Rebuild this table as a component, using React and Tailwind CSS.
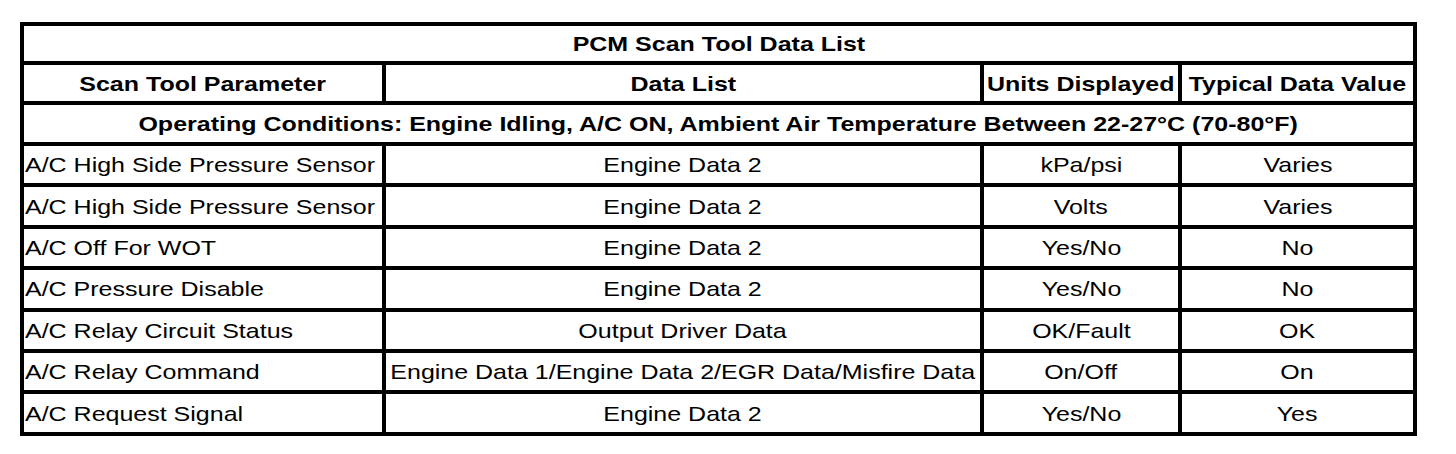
import React from "react";

const rows = [
  ["A/C High Side Pressure Sensor", "Engine Data 2", "kPa/psi", "Varies"],
  ["A/C High Side Pressure Sensor", "Engine Data 2", "Volts", "Varies"],
  ["A/C Off For WOT", "Engine Data 2", "Yes/No", "No"],
  ["A/C Pressure Disable", "Engine Data 2", "Yes/No", "No"],
  ["A/C Relay Circuit Status", "Output Driver Data", "OK/Fault", "OK"],
  [
    "A/C Relay Command",
    "Engine Data 1/Engine Data 2/EGR Data/Misfire Data",
    "On/Off",
    "On",
  ],
  ["A/C Request Signal", "Engine Data 2", "Yes/No", "Yes"],
];

// the source scan is stretched sideways, so text is widened a bit
const Txt = ({ children, left }) => (
  <span
    className={`inline-block whitespace-nowrap scale-x-[1.19] ${
      left ? "origin-left" : "origin-center"
    }`}
  >
    {children}
  </span>
);

const cell = "border-[4px] border-black p-0 align-middle";

export default function App() {
  return (
    <div className="bg-white w-[1456px] h-[454px] pt-[22px] pl-[20px] font-['Liberation_Sans',Arial,sans-serif] text-black text-[21px] leading-none">
      <table className="table-fixed border-collapse border-[4px] border-black w-[1393px]">
        <colgroup>
          <col className="w-[362px]" />
          <col className="w-[598px]" />
          <col className="w-[198px]" />
          <col className="w-[235px]" />
        </colgroup>
        <tbody>
          <tr className="h-[39px]">
            <td colSpan={4} className={`${cell} text-center font-bold`}>
              <Txt>PCM Scan Tool Data List</Txt>
            </td>
          </tr>
          <tr className="h-[40px] font-bold">
            <td className={`${cell} text-center`}>
              <Txt>Scan Tool Parameter</Txt>
            </td>
            <td className={`${cell} text-center`}>
              <Txt>Data List</Txt>
            </td>
            <td className={`${cell} text-center`}>
              <Txt>Units Displayed</Txt>
            </td>
            <td className={`${cell} text-center`}>
              <Txt>Typical Data Value</Txt>
            </td>
          </tr>
          <tr className="h-[41px]">
            <td colSpan={4} className={`${cell} text-center font-bold`}>
              <Txt>
                Operating Conditions: Engine Idling, A/C ON, Ambient Air
                Temperature Between 22-27°C (70-80°F)
              </Txt>
            </td>
          </tr>
          {rows.map((r, i) => (
            <tr key={i} className="h-[41.4px]">
              <td className={`${cell} pl-[1px]`}>
                <Txt left>{r[0]}</Txt>
              </td>
              <td className={`${cell} text-center`}>
                <Txt>{r[1]}</Txt>
              </td>
              <td className={`${cell} text-center`}>
                <Txt>{r[2]}</Txt>
              </td>
              <td className={`${cell} text-center`}>
                <Txt>{r[3]}</Txt>
              </td>
            </tr>
          ))}
        </tbody>
      </table>
    </div>
  );
}
